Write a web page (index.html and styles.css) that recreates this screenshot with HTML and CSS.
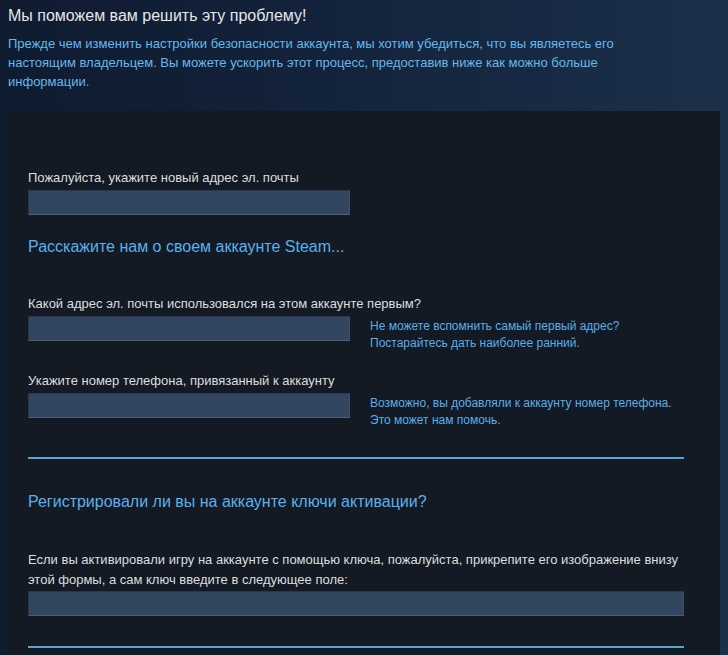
FILE: index.html
```html
<!DOCTYPE html>
<html lang="ru">
<head>
<meta charset="utf-8">
<link rel="stylesheet" href="styles.css">
</head>
<body>
<div class="page">
  <h1 class="title">Мы поможем вам решить эту проблему!</h1>
  <p class="intro">Прежде чем изменить настройки безопасности аккаунта, мы хотим убедиться, что вы являетесь его настоящим владельцем. Вы можете ускорить этот процесс, предоставив ниже как можно больше информации.</p>
  <div class="panel">
    <div class="field first">
      <label class="label">Пожалуйста, укажите новый адрес эл. почты</label>
      <div class="input short"></div>
    </div>
    <h2 class="section">Расскажите нам о своем аккаунте Steam...</h2>
    <div class="field">
      <label class="label">Какой адрес эл. почты использовался на этом аккаунте первым?</label>
      <div class="row">
        <div class="input short"></div>
        <div class="hint">Не можете вспомнить самый первый адрес?<br>Постарайтесь дать наиболее ранний.</div>
      </div>
    </div>
    <div class="field">
      <label class="label">Укажите номер телефона, привязанный к аккаунту</label>
      <div class="row">
        <div class="input short"></div>
        <div class="hint">Возможно, вы добавляли к аккаунту номер телефона.<br>Это может нам помочь.</div>
      </div>
    </div>
    <hr class="sep">
    <h2 class="section second">Регистрировали ли вы на аккаунте ключи активации?</h2>
    <div class="field para">
      <label class="label">Если вы активировали игру на аккаунте с помощью ключа, пожалуйста, прикрепите его изображение внизу этой формы, а сам ключ введите в следующее поле:</label>
      <div class="input wide"></div>
    </div>
    <hr class="sep last">
  </div>
</div>
</body>
</html>
```

FILE: styles.css
```css
html, body {
  margin: 0;
  padding: 0;
}
body {
  background: linear-gradient(90deg, #0f1b2f 0%, #13233b 45%, #1c304a 100%);
  font-family: Arial, "Liberation Sans", sans-serif;
  min-height: 655px;
  overflow: hidden;
}
.page {
  padding: 6px 8px 0 8px;
}
.title {
  margin: 0;
  font-size: 16px;
  font-weight: normal;
  color: #e6e6e6;
  line-height: 20px;
}
.intro {
  margin: 8px 0 0 0;
  font-size: 13px;
  line-height: 19px;
  color: #66b8ec;
  width: 640px;
}
.panel {
  margin-top: 20px;
  background: #131a24;
  padding: 57px 36px 40px 20px;
}
.field {
  display: flex;
  flex-direction: column;
}
.label {
  font-size: 13px;
  line-height: 19px;
  color: #dcdedf;
  margin-bottom: 3px;
}
.input {
  height: 23px;
  background: #32465f;
  border-top: 1px solid #26384d;
  border-left: 1px solid #26384d;
  border-bottom: 1px solid #4b5f76;
  border-right: 1px solid #3c506a;
  box-sizing: content-box;
}
.input.short {
  width: 320px;
  flex: none;
}
.row {
  display: flex;
  gap: 20px;
}
.hint {
  font-size: 12px;
  line-height: 17px;
  color: #5aaee8;
  padding-top: 2px;
}
.section {
  margin: 20px 0 35px 0;
  font-size: 16px;
  font-weight: normal;
  line-height: 24px;
  color: #5ab0ec;
}
.field + .field {
  margin-top: 19px;
}
.sep {
  margin: 28px 0 0 0;
  border: none;
  height: 2px;
  background: #5ba3d4;
}
.section.second {
  margin-top: 31px;
  margin-bottom: 36px;
}
.para .label {
  line-height: 20px;
  margin-bottom: 1px;
}
.sep.last {
  margin-top: 30px;
}
```
